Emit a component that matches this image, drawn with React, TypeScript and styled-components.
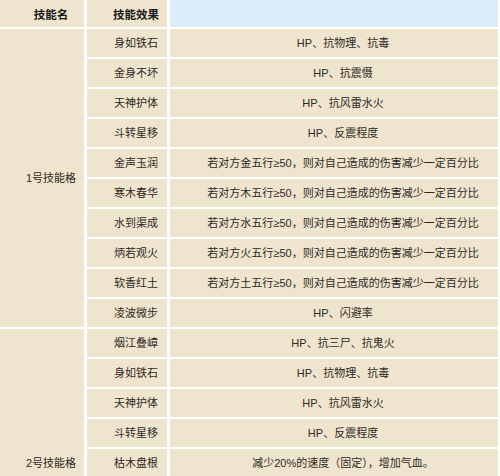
import React from 'react';
import styled, { createGlobalStyle } from 'styled-components';

const GlobalStyle = createGlobalStyle`
  html, body {
    margin: 0;
    padding: 0;
    background: #ffffff;
    overflow: hidden;
  }
  body {
    font-family: "Liberation Sans", "Noto Sans CJK SC", sans-serif;
  }
`;

const Frame = styled.div`
  width: 500px;
  height: 476px;
  overflow: hidden;
`;

const Table = styled.table`
  border-collapse: separate;
  border-spacing: 3px 2px;
  margin: -2px 0 0 -3px;
  table-layout: fixed;
  width: 504px;
`;

const Head = styled.th<{ $blank?: boolean }>`
  height: 27px;
  padding: 0 0 0 18px;
  background: ${(p) => (p.$blank ? '#dcedf9' : '#efe4cd')};
  color: #1a1a1a;
  font-size: 11.5px;
  font-weight: bold;
  text-align: center;
  vertical-align: middle;
`;

const Cell = styled.td<{ $bottom?: boolean }>`
  height: 28px;
  padding: 0 0 0 18px;
  background: #efe4cd;
  color: #2e2a26;
  font-size: 11px;
  line-height: 28px;
  text-align: center;
  vertical-align: ${(p) => (p.$bottom ? 'bottom' : 'middle')};
  white-space: nowrap;
  overflow: hidden;
`;

type Row = [string, string];

const group1: Row[] = [
  ['身如铁石', 'HP、抗物理、抗毒'],
  ['金身不坏', 'HP、抗震慑'],
  ['天神护体', 'HP、抗风雷水火'],
  ['斗转星移', 'HP、反震程度'],
  ['金声玉润', '若对方金五行≥50，则对自己造成的伤害减少一定百分比'],
  ['寒木春华', '若对方木五行≥50，则对自己造成的伤害减少一定百分比'],
  ['水到渠成', '若对方水五行≥50，则对自己造成的伤害减少一定百分比'],
  ['炳若观火', '若对方火五行≥50，则对自己造成的伤害减少一定百分比'],
  ['软香红土', '若对方土五行≥50，则对自己造成的伤害减少一定百分比'],
  ['凌波微步', 'HP、闪避率'],
];

const group2: Row[] = [
  ['烟江叠嶂', 'HP、抗三尸、抗鬼火'],
  ['身如铁石', 'HP、抗物理、抗毒'],
  ['天神护体', 'HP、抗风雷水火'],
  ['斗转星移', 'HP、反震程度'],
  ['枯木盘根', '减少20%的速度（固定），增加气血。'],
];

function Group({ label, rows, bottom }: { label: string; rows: Row[]; bottom?: boolean }) {
  return (
    <>
      {rows.map(([name, effect], i) => (
        <tr key={name + i}>
          {i === 0 && (
            <Cell rowSpan={rows.length} $bottom={bottom}>
              {label}
            </Cell>
          )}
          <Cell>{name}</Cell>
          <Cell>{effect}</Cell>
        </tr>
      ))}
    </>
  );
}

export default function App() {
  return (
    <>
      <GlobalStyle />
      <Frame>
        <Table>
          <colgroup>
            <col style={{ width: 84 }} />
            <col style={{ width: 80 }} />
            <col />
          </colgroup>
          <thead>
            <tr>
              <Head>技能名</Head>
              <Head>技能效果</Head>
              <Head $blank />
            </tr>
          </thead>
          <tbody>
            <Group label="1号技能格" rows={group1} />
            <Group label="2号技能格" rows={group2} bottom />
          </tbody>
        </Table>
      </Frame>
    </>
  );
}
